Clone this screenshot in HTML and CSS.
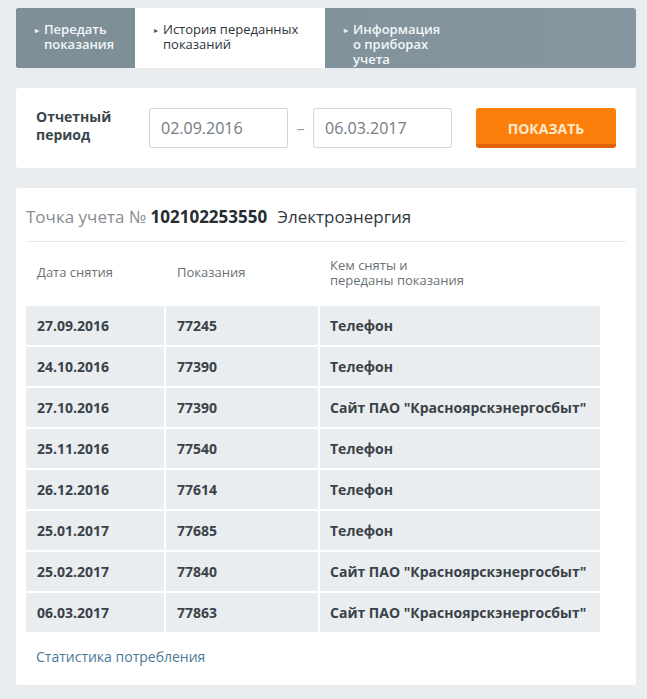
FILE: index.html
```html
<!DOCTYPE html>
<html lang="ru">
<head>
<meta charset="utf-8">
<link rel="stylesheet" href="styles.css">
</head>
<body>
<div class="page">
  <nav class="tabs">
    <div class="tab tab-1"><span class="bullet">▸</span><span>Передать<br>показания</span></div>
    <div class="tab tab-active"><span class="bullet">▸</span><span>История переданных<br>показаний</span></div>
    <div class="tab tab-3"><span class="bullet">▸</span><span>Информация<br>о приборах<br>учета</span></div>
  </nav>

  <section class="card filter">
    <div class="filter-label">Отчетный<br>период</div>
    <div class="date-input">02.09.2016</div>
    <div class="dash">–</div>
    <div class="date-input">06.03.2017</div>
    <button class="btn-show">ПОКАЗАТЬ</button>
  </section>

  <section class="card history">
    <h2 class="point-title"><span class="muted">Точка учета №</span> <b>102102253550</b><span class="kind">Электроэнергия</span></h2>
    <div class="grid head">
      <div class="hcell">Дата снятия</div>
      <div class="hcell">Показания</div>
      <div class="hcell">Кем сняты и<br>переданы показания</div>
    </div>
    <div class="grid rows">
      <div class="cell">27.09.2016</div><div class="cell">77245</div><div class="cell c3">Телефон</div>
      <div class="cell">24.10.2016</div><div class="cell">77390</div><div class="cell c3">Телефон</div>
      <div class="cell">27.10.2016</div><div class="cell">77390</div><div class="cell c3">Сайт ПАО "Красноярскэнергосбыт"</div>
      <div class="cell">25.11.2016</div><div class="cell">77540</div><div class="cell c3">Телефон</div>
      <div class="cell">26.12.2016</div><div class="cell">77614</div><div class="cell c3">Телефон</div>
      <div class="cell">25.01.2017</div><div class="cell">77685</div><div class="cell c3">Телефон</div>
      <div class="cell">25.02.2017</div><div class="cell">77840</div><div class="cell c3">Сайт ПАО "Красноярскэнергосбыт"</div>
      <div class="cell">06.03.2017</div><div class="cell">77863</div><div class="cell c3">Сайт ПАО "Красноярскэнергосбыт"</div>
    </div>
    <a class="stat-link" href="#">Статистика потребления</a>
  </section>
</div>
</body>
</html>
```

FILE: styles.css
```css
* { box-sizing: border-box; }
html, body {
  margin: 0;
  padding: 0;
  background: #e9edf0;
  font-family: "Open Sans", "Noto Sans", sans-serif;
  color: #3a4349;
}
.page {
  width: 620px;
  margin-left: 16px;
  padding-top: 8px;
}
.tabs {
  display: flex;
  height: 60px;
  border-radius: 3px;
  overflow: hidden;
  background: linear-gradient(90deg, #7d8e97 0%, #8596a0 100%);
}
.tab {
  display: flex;
  align-items: flex-start;
  padding: 14px 0 0 19px;
  font-size: 13px;
  line-height: 15px;
  font-weight: 600;
  color: #f3f6f8;
}
.tab .bullet {
  font-size: 8px;
  line-height: 15px;
  width: 8px;
  margin-right: 1px;
  color: #e8eef1;
}
.tab-1 { width: 119px; background: #7e8f98; }
.tab-active {
  width: 190px;
  background: #fff;
  color: #2d353b;
  font-weight: 400;
}
.tab-active .bullet { color: #4a545a; }
.tab-3 { flex: 1; }

.card {
  background: #fff;
  border-radius: 3px;
}
.filter {
  margin-top: 20px;
  height: 80px;
  display: flex;
  align-items: center;
  padding: 0 20px;
}
.filter-label {
  width: 113px;
  font-size: 14px;
  line-height: 18px;
  font-weight: 700;
  color: #3b454c;
  margin-top: -4px;
}
.date-input {
  width: 139px;
  height: 40px;
  border: 1px solid #d3d7da;
  border-radius: 2px;
  padding-left: 11px;
  font-size: 16px;
  line-height: 38px;
  color: #737b80;
}
.dash {
  width: 25px;
  text-align: center;
  font-size: 16px;
  color: #9aa1a6;
}
.btn-show {
  margin-left: 24px;
  width: 140px;
  height: 40px;
  border: 0;
  border-bottom: 4px solid #e0620c;
  border-radius: 3px;
  background: #fc7f0c;
  color: #fde9c9;
  font-family: "Open Sans", sans-serif;
  font-weight: 700;
  font-size: 14px;
  padding: 4px 0 0;
}
.history {
  margin-top: 20px;
  padding: 0 10px 18px 10px;
}
.point-title {
  margin: 0;
  height: 54px;
  padding-top: 18px;
  font-size: 17px;
  line-height: 22px;
  font-weight: 400;
  color: #2f373d;
  border-bottom: 1px solid #e8ebed;
}
.point-title .muted { color: #868c90; }
.point-title b { font-weight: 700; color: #262d32; }
.point-title .kind { margin-left: 10px; }
.grid {
  display: grid;
  grid-template-columns: 138px 152px 280px;
  column-gap: 2px;
  row-gap: 2px;
}
.head {
  height: 64px;
  align-items: center;
}
.hcell {
  font-size: 13px;
  line-height: 15px;
  color: #6a7277;
  padding-left: 11px;
  padding-bottom: 4px;
}
.hcell:nth-child(3) { padding-left: 10px; padding-bottom: 2px; }
.cell {
  height: 39px;
  background: #e9edf0;
  padding-left: 11px;
  font-size: 14px;
  font-weight: 700;
  line-height: 39px;
  color: #3a4248;
  white-space: nowrap;
}
.cell.c3 { padding-left: 10px; }
.stat-link {
  display: block;
  margin-top: 15px;
  padding-left: 10px;
  font-size: 14px;
  line-height: 20px;
  color: #4a7897;
  text-decoration: none;
}
```
